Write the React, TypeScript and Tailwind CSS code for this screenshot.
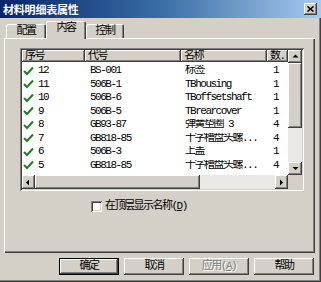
const rows = [
    { no: '12', code: 'BS-001', name: '标签', qty: '1' },
    { no: '11', code: '506B-1', name: 'TBhousing', qty: '1' },
    { no: '10', code: '506B-6', name: 'TBoffsetshaft', qty: '1' },
    { no: '9', code: '506B-5', name: 'TBrearcover', qty: '1' },
    { no: '8', code: 'GB93-87', name: '弹簧垫圈 3', qty: '4' },
    { no: '7', code: 'GB818-85', name: '十字槽盘头螺...', qty: '4' },
    { no: '6', code: '506B-3', name: '上盖', qty: '1' },
    { no: '5', code: 'GB818-85', name: '十字槽盘头螺...', qty: '4' },
];

const raised = 'shadow-[inset_-1px_-1px_#404040,inset_1px_1px_#ffffff,inset_-2px_-2px_#808080,inset_2px_2px_#d4d0c8]';

function Check() {
    return (
        <svg width="11" height="10" viewBox="0 0 11 10" className="shrink-0">
            <path d="M1 5 L4 8 L10 1.5" fill="none" stroke="#1d7f1d" strokeWidth={2} />
        </svg>
    );
}

function Arrow({ dir }: { dir: 'up' | 'down' | 'left' | 'right' }) {
    const d = {
        up: 'M1.5 4.5 L4.5 1.5 L7.5 4.5 Z',
        down: 'M1.5 2 L4.5 5 L7.5 2 Z',
        left: 'M5 1.5 L2 4.5 L5 7.5 Z',
        right: 'M3 1.5 L6 4.5 L3 7.5 Z',
    }[dir];
    return (
        <svg width="9" height={dir === 'up' || dir === 'down' ? 7 : 9} viewBox={dir === 'up' || dir === 'down' ? '0 0 9 7' : '0 0 9 9'}>
            <path d={d} fill="#000" />
        </svg>
    );
}

function ScrollBtn({ dir, className }: { dir: 'up' | 'down' | 'left' | 'right'; className: string }) {
    return (
        <div className={`${className} bg-[#d4d0c8] flex items-center justify-center ${raised}`}>
            <Arrow dir={dir} />
        </div>
    );
}

export default function App() {
    return (
        <div className="w-[321px] h-[282px] bg-[#d4d0c8] flex flex-col overflow-hidden text-black text-[11px] tracking-[-1.5px] font-[family-name:'Liberation_Mono','Noto_Sans_CJK_SC',monospace] shadow-[inset_-1px_-1px_#404040,inset_-2px_-2px_#808080]">
            {/* Title bar */}
            <div className="h-[18px] shrink-0 flex items-center justify-between pl-[3px] pr-[4px] bg-gradient-to-r from-[#0a246a] via-[#3a6ea5] to-[#a6caf0]">
                <span className="text-white font-bold text-[11px] tracking-[-0.2px] leading-none font-[family-name:'Noto_Sans_CJK_SC',sans-serif]">材料明细表属性</span>
                <div className={`w-[13px] h-[12px] bg-[#d4d0c8] flex items-center justify-center ${raised}`}>
                    <svg width="7" height="6" viewBox="0 0 7 6">
                        <path d="M0.5 0.5 L6.5 5.5 M6.5 0.5 L0.5 5.5" stroke="#000" strokeWidth={1.6} />
                    </svg>
                </div>
            </div>

            {/* Tabs */}
            <div className="mt-[3px] h-[17px] pl-[6px] flex items-end relative z-10">
                <div className="w-[40px] h-[14px] flex items-center justify-center rounded-t-[2px] shadow-[inset_1px_1px_#ffffff,inset_-1px_0_#404040,inset_-2px_0_#808080]">
                    <span className="pt-[1px]">配置</span>
                </div>
                <div className="w-[40px] h-[18px] -mb-[1px] bg-[#d4d0c8] flex items-center justify-center rounded-t-[2px] shadow-[inset_1px_1px_#ffffff,inset_-1px_0_#404040,inset_-2px_0_#808080]">
                    <span className="pb-[3px]">内容</span>
                </div>
                <div className="w-[38px] h-[14px] flex items-center justify-center rounded-t-[2px] shadow-[inset_1px_1px_#ffffff,inset_-1px_0_#404040,inset_-2px_0_#808080]">
                    <span className="pt-[1px]">控制</span>
                </div>
            </div>

            {/* Panel */}
            <div className="mx-[4px] w-[311px] h-[215px] shrink-0 pt-[10px] pl-[16px] shadow-[inset_1px_1px_#ffffff,inset_-1px_-1px_#404040,inset_-2px_-2px_#808080]">
                {/* List view */}
                <div className="w-[284px] h-[143px] p-[2px] bg-white shadow-[inset_1px_1px_#808080,inset_-1px_-1px_#ffffff,inset_2px_2px_#404040,inset_-2px_-2px_#d4d0c8]">
                    <div className="flex h-[125px]">
                        <div className="w-[266px] flex flex-col">
                            <div className="h-[12px] flex bg-[#d4d0c8]">
                                {[
                                    ['序号', 'w-[63px]'],
                                    ['代号', 'w-[96px]'],
                                    ['名称', 'w-[86px]'],
                                    ['数.', 'w-[21px]'],
                                ].map(([t, w]) => (
                                    <div key={t} className={`${w} h-full pl-[3px] flex items-center leading-none overflow-hidden whitespace-nowrap shadow-[inset_-1px_-1px_#404040,inset_1px_1px_#ffffff,inset_-2px_-2px_#808080]`}>
                                        {t}
                                    </div>
                                ))}
                            </div>
                            <div className="pt-[2px] flex flex-col">
                                {rows.map((r) => (
                                    <div key={r.no} className="h-[13.5px] flex items-center leading-none whitespace-nowrap">
                                        <div className="w-[63px] pl-[1px] flex items-center gap-[4px]">
                                            <Check />
                                            <span>{r.no}</span>
                                        </div>
                                        <div className="w-[96px] pl-[5px]">{r.code}</div>
                                        <div className="w-[86px] pl-[4px] overflow-hidden">{r.name}</div>
                                        <div className="w-[21px] pl-[6px]">{r.qty}</div>
                                    </div>
                                ))}
                            </div>
                        </div>
                        {/* Vertical scrollbar */}
                        <div className="w-[14px] h-full flex flex-col bg-[#ebe9e5]">
                            <ScrollBtn dir="up" className="w-[14px] h-[13px]" />
                            <div className={`w-[14px] h-[65px] bg-[#d4d0c8] ${raised}`} />
                            <div className="flex-1" />
                            <ScrollBtn dir="down" className="w-[14px] h-[13px]" />
                        </div>
                    </div>
                    {/* Horizontal scrollbar */}
                    <div className="h-[14px] flex">
                        <div className="w-[266px] flex bg-[#ebe9e5]">
                            <ScrollBtn dir="left" className="w-[13px] h-[14px]" />
                            <div className={`w-[165px] h-[14px] bg-[#d4d0c8] ${raised}`} />
                            <div className="flex-1" />
                            <ScrollBtn dir="right" className="w-[13px] h-[14px]" />
                        </div>
                        <div className="w-[14px] h-[14px] bg-[#d4d0c8]" />
                    </div>
                </div>

                {/* Checkbox */}
                <div className="mt-[10px] ml-[71px] flex items-center gap-[3px] leading-none">
                    <div className="w-[11px] h-[11px] bg-white shadow-[inset_1px_1px_#808080,inset_-1px_-1px_#ffffff,inset_2px_2px_#404040,inset_-2px_-2px_#d4d0c8]" />
                    <span>
                        在顶层显示名称(<span className="underline">D</span>)
                    </span>
                </div>
            </div>

            {/* Buttons */}
            <div className="mt-[5px] pl-[59px] flex gap-[5px]">
                <div className="w-[60px] h-[17px] border border-black flex items-center justify-center shadow-[inset_-1px_-1px_#404040,inset_1px_1px_#ffffff,inset_-2px_-2px_#808080]">
                    确定
                </div>
                <div className={`w-[60px] h-[17px] flex items-center justify-center ${raised}`}>取消</div>
                <div className={`w-[60px] h-[17px] flex items-center justify-center text-[#808080] [text-shadow:1px_1px_#ffffff] ${raised}`}>
                    应用(<span className="underline">A</span>)
                </div>
                <div className={`w-[60px] h-[17px] flex items-center justify-center ${raised}`}>帮助</div>
            </div>
        </div>
    );
}
